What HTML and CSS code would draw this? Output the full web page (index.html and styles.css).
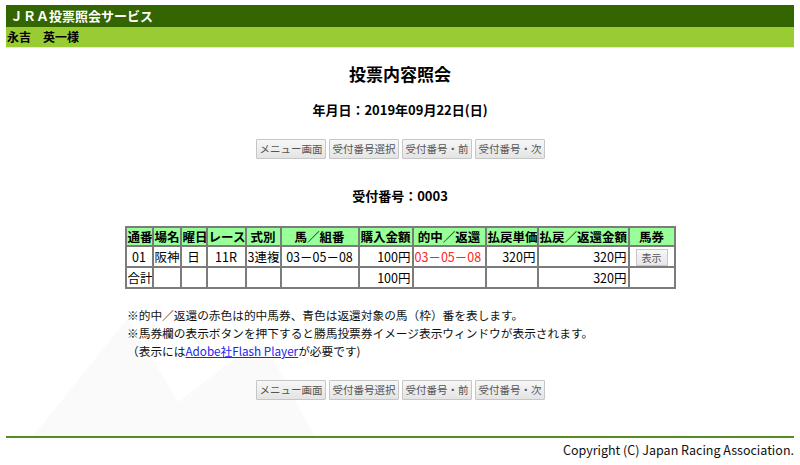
FILE: index.html
```html
<!DOCTYPE html>
<html lang="ja">
<head>
<meta charset="utf-8">
<title>JRA投票照会サービス</title>
<link rel="stylesheet" href="styles.css">
</head>
<body>
<svg class="watermark" width="800" height="465" viewBox="0 0 800 465" aria-hidden="true">
  <polygon points="33,436 128,318 178,402 262,338 314,436" fill="#fafafa"/>
</svg>
<div class="page">
  <header class="top">
    <div class="service">ＪＲＡ投票照会サービス</div>
    <div class="user">永吉　英一様</div>
  </header>

  <main class="content">
    <h1 class="title">投票内容照会</h1>
    <p class="date">年月日：2019年09月22日(日)</p>

    <div class="btns">
      <button class="btn">メニュー画面</button>
      <button class="btn">受付番号選択</button>
      <button class="btn">受付番号・前</button>
      <button class="btn">受付番号・次</button>
    </div>

    <p class="receipt">受付番号：0003</p>

    <table class="bets">
      <colgroup>
        <col class="c1"><col class="c2"><col class="c3"><col class="c4"><col class="c5"><col class="c6"><col class="c7"><col class="c8"><col class="c9"><col class="c10"><col class="c11">
      </colgroup>
      <thead>
        <tr>
          <th>通番</th><th>場名</th><th>曜日</th><th>レース</th><th>式別</th><th>馬／組番</th><th>購入金額</th><th>的中／返還</th><th>払戻単価</th><th>払戻／返還金額</th><th>馬券</th>
        </tr>
      </thead>
      <tbody>
        <tr>
          <td class="ctr">01</td><td>阪神</td><td class="ctr">日</td><td class="ctr">11R</td><td>3連複</td><td class="ctr">03－05－08</td><td class="num">100円</td><td class="hit">03－05－08</td><td class="num">320円</td><td class="num">320円</td><td class="ctr"><button class="show">表示</button></td>
        </tr>
        <tr class="total">
          <td>合計</td><td></td><td></td><td></td><td></td><td></td><td class="num">100円</td><td></td><td></td><td class="num">320円</td><td></td>
        </tr>
      </tbody>
    </table>

    <div class="notes">
      <p>※的中／返還の赤色は的中馬券、青色は返還対象の馬（枠）番を表します。</p>
      <p>※馬券欄の表示ボタンを押下すると勝馬投票券イメージ表示ウィンドウが表示されます。</p>
      <p>（表示には<a href="#">Adobe社Flash Player</a>が必要です)</p>
    </div>

    <div class="btns btns-bottom">
      <button class="btn">メニュー画面</button>
      <button class="btn">受付番号選択</button>
      <button class="btn">受付番号・前</button>
      <button class="btn">受付番号・次</button>
    </div>
  </main>

  <footer class="foot">Copyright (C) Japan Racing Association.</footer>
</div>
</body>
</html>
```

FILE: styles.css
```css
html, body {
  margin: 0;
  padding: 0;
  background: #fff;
}
body {
  font-family: "Noto Sans CJK JP", "Noto Sans", sans-serif;
  color: #000;
  position: relative;
  min-height: 465px;
}
.watermark {
  position: absolute;
  left: 0;
  top: 0;
  z-index: 0;
}
.page {
  position: relative;
  z-index: 1;
  padding: 5px 6px 0;
}
.top {
  border-bottom: 1px solid #e4e4e4;
}
.service {
  background: #336600;
  color: #fff;
  font-weight: bold;
  font-size: 13px;
  height: 22px;
  line-height: 22px;
  padding-left: 4px;
}
.user {
  background: #99cc33;
  font-weight: bold;
  font-size: 12px;
  height: 20px;
  line-height: 20px;
  padding-left: 1px;
}
.content {
  display: flex;
  flex-direction: column;
  align-items: center;
}
.title {
  margin: 14px 0 0;
  font-size: 17px;
  line-height: 24px;
  font-weight: bold;
}
.date {
  margin: 15px 0 0;
  font-size: 13px;
  line-height: 18px;
  font-weight: bold;
}
.btns {
  display: flex;
  gap: 3px;
  margin-top: 20px;
}
.btn {
  font-family: inherit;
  font-size: 10.5px;
  color: #555;
  height: 20px;
  line-height: 16px;
  padding: 0 3px;
  width: 70px;
  border: 1px solid #c6c6c6;
  border-radius: 1px;
  background: linear-gradient(#f7f7f7, #e4e4e4);
  white-space: nowrap;
}
.receipt {
  margin: 28px 0 0;
  font-size: 13px;
  line-height: 18px;
  font-weight: bold;
}
.bets {
  margin-top: 21px;
  width: 549px;
  table-layout: fixed;
  border-collapse: collapse;
  font-size: 12.5px;
  border: 2px solid #7c7c7c;
}
.bets th, .bets td {
  border: 2px solid #7c7c7c;
  padding: 0 1px;
  white-space: nowrap;
  overflow: hidden;
}
.bets th {
  background: #99ff99;
  font-weight: bold;
  height: 17px;
  line-height: 17px;
  text-align: center;
}
.bets td {
  height: 18px;
  line-height: 18px;
  background: #fff;
}
.bets tr.total td {
  height: 19px;
}
.c1 { width: 27px; }
.c2 { width: 28px; }
.c3 { width: 26px; }
.c4 { width: 39px; }
.c5 { width: 35px; }
.c6 { width: 78px; }
.c7 { width: 54px; }
.c8 { width: 73px; }
.c9 { width: 52px; }
.c10 { width: 91px; }
.c11 { width: 46px; }
.ctr { text-align: center; }
.num { text-align: right; }
.hit { color: #ff2222; }
.show {
  font-family: inherit;
  font-size: 10px;
  color: #555;
  height: 17px;
  line-height: 13px;
  padding: 0 5px;
  border: 1px solid #c8c8c8;
  background: linear-gradient(#f7f7f7, #e6e6e6);
  vertical-align: middle;
}
.notes {
  align-self: flex-start;
  margin: 17px 0 0 121px;
  font-size: 11.7px;
  line-height: 18px;
  color: #111;
}
.notes p {
  margin: 0;
}
.notes a {
  color: #2222ee;
  text-decoration: underline;
}
.btns-bottom {
  margin-top: 20px;
}
.foot {
  margin-top: 36px;
  border-top: 2px solid #558b24;
  text-align: right;
  font-size: 12.5px;
  line-height: 18px;
  padding-top: 3px;
  color: #111;
}
```
